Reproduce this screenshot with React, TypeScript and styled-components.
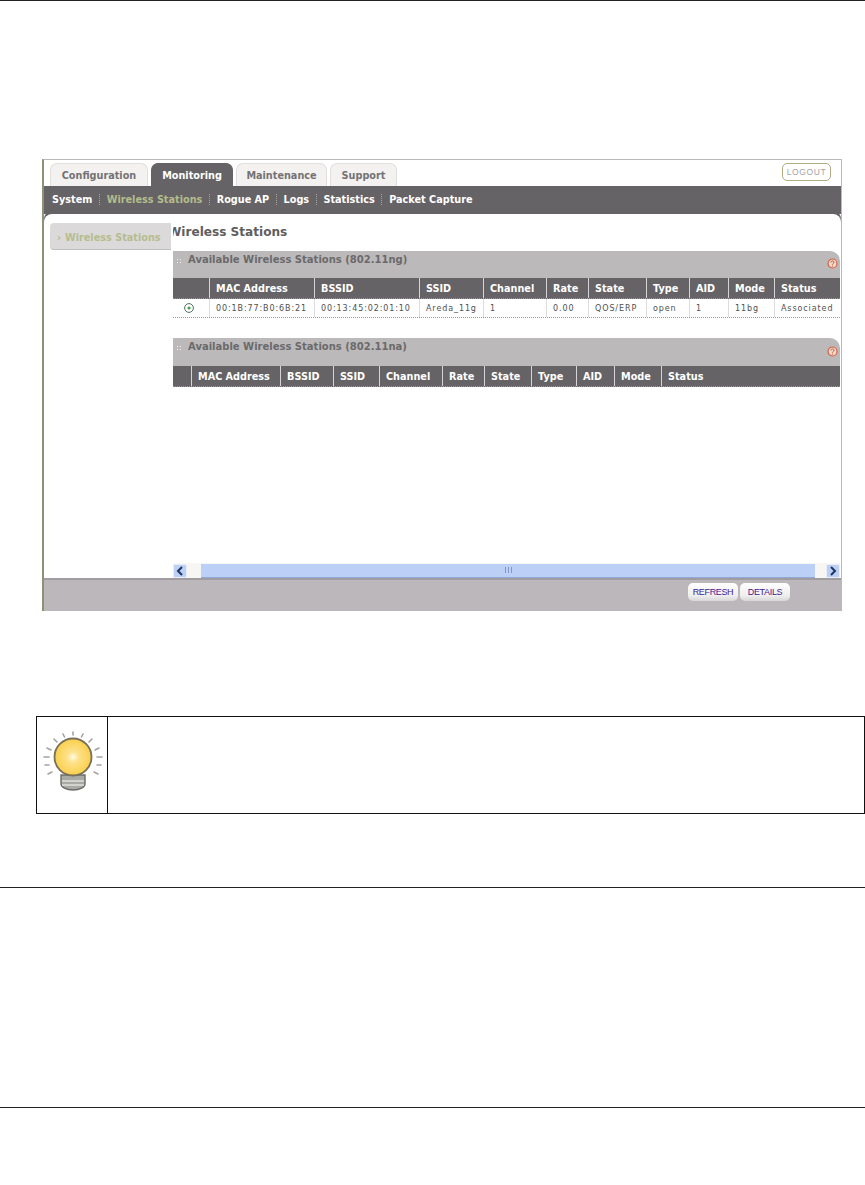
// App.tsx
import React from 'react';
import styled, { createGlobalStyle } from 'styled-components';

const GlobalStyle = createGlobalStyle`
  html, body {
    margin: 0;
    padding: 0;
    background: #ffffff;
  }
`;

const Page = styled.div`
  width: 865px;
  height: 1185px;
  overflow: hidden;
  display: flex;
  flex-direction: column;
  font-family: "DejaVu Sans", Verdana, sans-serif;
`;

const Rule = styled.hr<{ $after: number }>`
  width: 100%;
  height: 1px;
  margin: 0 0 ${props => props.$after}px;
  border: 0;
  background: #222222;
  flex: none;
`;

const Window = styled.div`
  flex: none;
  width: 797px;
  height: 451px;
  margin-left: 42px;
  display: flex;
  flex-direction: column;
  border-top: 1px solid #b9b9b9;
  border-left: 2px solid #8f9272;
  border-right: 1px solid #b9b9b9;
  background: #ffffff;
`;

const TabRow = styled.div`
  flex: none;
  height: 26px;
  display: flex;
  align-items: flex-end;
  gap: 3px;
  padding-left: 6px;
  position: relative;
`;

const Tab = styled.div<{ $active?: boolean; $width: number }>`
  width: ${props => props.$width}px;
  height: 23px;
  box-sizing: border-box;
  display: flex;
  align-items: center;
  justify-content: center;
  font-size: 9.7px;
  font-weight: 700;
  border-radius: 7px 7px 0 0;
  border: 1px solid ${props => (props.$active ? '#666366' : '#e2dede')};
  border-bottom: 0;
  color: ${props => (props.$active ? '#ffffff' : '#737373')};
  background: ${props => (props.$active ? '#666366' : '#f4f1f1')};
`;

const Logout = styled.div`
  position: absolute;
  right: 10px;
  top: 3px;
  width: 49px;
  height: 18px;
  box-sizing: border-box;
  border: 1px solid #b3ab84;
  border-radius: 5px;
  display: flex;
  align-items: center;
  justify-content: center;
  font-family: "Liberation Sans", Arial, sans-serif;
  font-size: 8.5px;
  letter-spacing: 0.6px;
  color: #a3a3a3;
`;

const SubNav = styled.div`
  flex: none;
  height: 28px;
  display: flex;
  align-items: center;
  padding: 0 0 2px 8px;
  box-sizing: border-box;
  background: #666366;
`;

const SubNavItem = styled.span<{ $active?: boolean }>`
  font-size: 9.7px;
  font-weight: 700;
  color: ${props => (props.$active ? '#b4bc8c' : '#ffffff')};
  padding-right: 6.7px;
  margin-right: 6.7px;
  border-right: 1px dotted #a8a6a8;
  line-height: 11px;

  &:last-child {
    border-right: 0;
  }
`;

const Body = styled.div`
  flex: 1;
  min-height: 0;
  display: flex;
  background: #ffffff;
  border-radius: 8px 8px 0 0;
  padding-left: 6px;
  box-shadow: 0 -3px 0 #666366;
  overflow: hidden;
`;

const SideMenu = styled.div`
  flex: none;
  width: 121px;
  padding-top: 9px;
`;

const SideItem = styled.div`
  height: 27px;
  box-sizing: border-box;
  display: flex;
  align-items: center;
  padding: 2px 0 0 7px;
  gap: 4px;
  font-size: 9.7px;
  font-weight: 700;
  color: #b5bd8e;
  background: #dbd9da;
  border-radius: 4px 0 0 4px;
  border-bottom: 1px solid #c0bec0;
`;

const Main = styled.div`
  flex: 1;
  min-width: 0;
  display: flex;
  flex-direction: column;
  margin-left: 2px;
`;

const TitleClip = styled.div`
  flex: none;
  height: 37px;
  overflow: hidden;
  display: flex;
  align-items: center;
  padding-bottom: 1px;
  box-sizing: border-box;
`;

const Title = styled.h1`
  margin: 0 0 0 -5px;
  font-size: 12.1px;
  font-weight: 700;
  color: #5e5e5e;
  white-space: nowrap;
`;

const Panel = styled.section<{ $top?: number }>`
  flex: none;
  margin: ${props => props.$top ?? 0}px 1px 0 0;
`;

const PanelHead = styled.div<{ $height: number }>`
  height: ${props => props.$height}px;
  position: relative;
  display: flex;
  align-items: flex-start;
  gap: 6px;
  padding: 3px 0 0 3px;
  box-sizing: border-box;
  background: #bcb9bb;
  border-radius: 0 10px 0 0;
  font-size: 10px;
  font-weight: 700;
  color: #6a6a6a;
`;

const Grip = styled.span`
  width: 6px;
  height: 6px;
  margin-top: 4px;
  flex: none;
  background-image: radial-gradient(#f2f2f2 1px, transparent 1px);
  background-size: 3px 3px;
`;

const HelpBadge = styled.svg`
  position: absolute;
  right: 2px;
  bottom: 9px;
  width: 11px;
  height: 11px;
`;

const Row = styled.div<{ $columns: string; $head?: boolean }>`
  display: grid;
  grid-template-columns: ${props => props.$columns};
  height: ${props => (props.$head ? '20px' : '18px')};
  background: ${props => (props.$head ? '#666366' : '#ffffff')};
  color: ${props => (props.$head ? '#ffffff' : '#505050')};
  font-size: ${props => (props.$head ? '9.7px' : '8px')};
  font-weight: ${props => (props.$head ? 700 : 400)};
  letter-spacing: ${props => (props.$head ? '0' : '0.9px')};
  border-bottom: 1px dotted #9a9a9a;
`;

const Cell = styled.div<{ $head?: boolean }>`
  display: flex;
  align-items: center;
  padding-left: 6px;
  white-space: nowrap;
  overflow: hidden;
  border-left: 1px solid ${props => (props.$head ? '#d6d4d6' : '#dddddd')};

  &:first-child {
    border-left: 0;
    padding-left: 11px;
  }
`;

const Scrollbar = styled.div`
  margin-top: auto;
  margin-right: 1px;
  flex: none;
  height: 15px;
  display: flex;
  align-items: center;
  background: #f7f6f2;
`;

const ScrollButton = styled.div`
  flex: none;
  width: 14px;
  height: 14px;
  display: flex;
  align-items: center;
  justify-content: center;
  background: #bdd0f4;
  border: 1px solid #e8eefb;
  box-sizing: border-box;
  border-radius: 2px;
`;

const ScrollThumb = styled.div`
  flex: 1;
  height: 14px;
  margin: 0 11px 0 14px;
  background: #bccff6;
  border-bottom: 1px solid #8ea8d8;
  box-sizing: border-box;
  display: flex;
  align-items: center;
  justify-content: center;
`;

const ThumbGrip = styled.span`
  width: 7px;
  height: 6px;
  background: repeating-linear-gradient(90deg, #7f97c9 0 1px, transparent 1px 3px);
`;

const Footer = styled.div`
  flex: none;
  height: 33px;
  display: flex;
  justify-content: flex-end;
  align-items: center;
  gap: 2px;
  padding: 0 51px 7px 0;
  box-sizing: border-box;
  background: #bcb7bb;
  border-top: 2px solid #a09c9f;
`;

const FooterButton = styled.div`
  width: 50px;
  height: 18px;
  display: flex;
  align-items: center;
  justify-content: center;
  border-radius: 5px;
  background: linear-gradient(#ffffff, #efeeee 70%, #d8d6d7);
  font-family: "Liberation Sans", Arial, sans-serif;
  font-size: 9px;
  letter-spacing: -0.35px;
  color: #43218f;
`;

const Note = styled.div`
  flex: none;
  width: 829px;
  height: 98px;
  margin: 105px 0 73px 36px;
  display: flex;
  box-sizing: border-box;
  border: 1px solid #111111;
`;

const NoteIcon = styled.div`
  flex: none;
  width: 71px;
  border-right: 1px solid #111111;
  padding: 14px 0 0 5px;
  box-sizing: border-box;
`;

const columnsNg = '36px 105px 105px 64px 63px 42px 58px 43px 39px 46px 64px';
const columnsNa = '18px 89px 53px 46px 63px 42px 47px 45px 38px 47px 177px';

const namesNg = ['MAC Address', 'BSSID', 'SSID', 'Channel', 'Rate', 'State', 'Type', 'AID', 'Mode', 'Status'];
const valuesNg = ['00:1B:77:B0:6B:21', '00:13:45:02:01:10', 'Areda_11g', '1', '0.00', 'QOS/ERP', 'open', '1', '11bg', 'Associated'];

const HelpIcon = () => (
  <HelpBadge viewBox="0 0 11 11">
    <circle cx="5.5" cy="5.5" r="4.5" fill="#ead9d2" stroke="#d9603c" strokeWidth="1.2" />
    <path d="M4 4.4c0-2 3-2 3 0 0 1.1-1.5 1-1.5 2.2" fill="none" stroke="#c9502f" strokeWidth="1" />
    <circle cx="5.5" cy="8" r=".6" fill="#c9502f" />
  </HelpBadge>
);

const RadioIcon = () => (
  <svg width="10" height="10" viewBox="0 0 10 10">
    <circle cx="5" cy="5" r="4.4" fill="#ffffff" stroke="#4f6f5c" strokeWidth="1" />
    <circle cx="5" cy="5" r="1.6" fill="#3fa64a" />
  </svg>
);

const Bulb = () => (
  <svg width="62" height="62" viewBox="0 0 62 62">
    <defs>
      <radialGradient id="bulbGlow">
        <stop offset="0" stopColor="#fffbe8" />
        <stop offset="0.3" stopColor="#fde28c" />
        <stop offset="1" stopColor="#fbcf4a" />
      </radialGradient>
    </defs>
    <g stroke="#a3a3a0" strokeWidth="1.6" strokeLinecap="round">
      <path d="M31 1v3M21 3l1.5 3M41 3l-1.5 3M12 8l3 3M50 8l-3 3M5 17l4 2M57 17l-4 2M2 26h5M60 26h-5M3 34h4M59 34h-4M6 43l4-2M56 43l-4-2" />
    </g>
    <path d="M19 44h24v9c0 3-5 6-12 6s-12-3-12-6z" fill="#a9a9a5" stroke="#6d6d68" strokeWidth="1.4" />
    <path d="M20 50h22M20 54h22" stroke="#e0e0dc" strokeWidth="1.4" />
    <circle cx="31" cy="26" r="18.5" fill="url(#bulbGlow)" stroke="#77705a" strokeWidth="1.8" />
  </svg>
);

const Chevron = ({ left }: { left?: boolean }) => (
  <svg width="8" height="10" viewBox="0 0 8 10">
    <path d={left ? 'M6 1 2 5l4 4' : 'M2 1l4 4-4 4'} fill="none" stroke="#1d3566" strokeWidth="2" />
  </svg>
);

const App: React.FC = () => {
  return (
    <Page>
      <GlobalStyle />
      <Rule $after={158} />
      <Window>
        <TabRow>
          <Tab $width={98}>Configuration</Tab>
          <Tab $width={82} $active>Monitoring</Tab>
          <Tab $width={91}>Maintenance</Tab>
          <Tab $width={67}>Support</Tab>
          <Logout>LOGOUT</Logout>
        </TabRow>
        <SubNav>
          <SubNavItem>System</SubNavItem>
          <SubNavItem $active>Wireless Stations</SubNavItem>
          <SubNavItem>Rogue AP</SubNavItem>
          <SubNavItem>Logs</SubNavItem>
          <SubNavItem>Statistics</SubNavItem>
          <SubNavItem>Packet Capture</SubNavItem>
        </SubNav>
        <Body>
          <SideMenu>
            <SideItem>
              <span>›</span>
              Wireless Stations
            </SideItem>
          </SideMenu>
          <Main>
            <TitleClip>
              <Title>Wireless Stations</Title>
            </TitleClip>
            <Panel>
              <PanelHead $height={27}>
                <Grip />
                Available Wireless Stations (802.11ng)
                <HelpIcon />
              </PanelHead>
              <Row $columns={columnsNg} $head>
                <Cell $head />
                {namesNg.map(name => (
                  <Cell $head key={name}>{name}</Cell>
                ))}
              </Row>
              <Row $columns={columnsNg}>
                <Cell><RadioIcon /></Cell>
                {valuesNg.map((value, i) => (
                  <Cell key={i}>{value}</Cell>
                ))}
              </Row>
            </Panel>
            <Panel $top={20}>
              <PanelHead $height={28}>
                <Grip />
                Available Wireless Stations (802.11na)
                <HelpIcon />
              </PanelHead>
              <Row $columns={columnsNa} $head>
                <Cell $head />
                {namesNg.map(name => (
                  <Cell $head key={name}>{name}</Cell>
                ))}
              </Row>
            </Panel>
            <Scrollbar>
              <ScrollButton><Chevron left /></ScrollButton>
              <ScrollThumb><ThumbGrip /></ScrollThumb>
              <ScrollButton><Chevron /></ScrollButton>
            </Scrollbar>
          </Main>
        </Body>
        <Footer>
          <FooterButton>REFRESH</FooterButton>
          <FooterButton>DETAILS</FooterButton>
        </Footer>
      </Window>
      <Note>
        <NoteIcon><Bulb /></NoteIcon>
      </Note>
      <Rule $after={219} />
      <Rule $after={0} />
    </Page>
  );
};

export default App;
